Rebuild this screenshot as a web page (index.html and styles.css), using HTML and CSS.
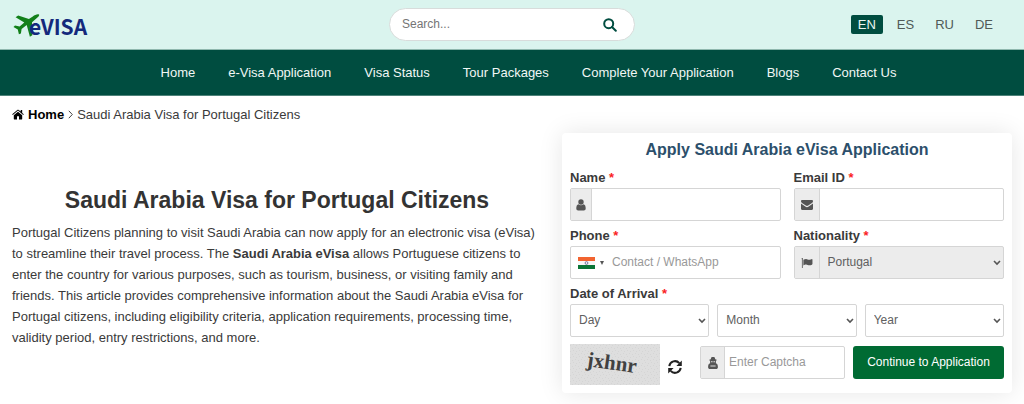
FILE: index.html
```html
<!DOCTYPE html>
<html lang="en">
<head>
<meta charset="utf-8">
<meta name="viewport" content="width=device-width, initial-scale=1">
<title>Saudi Arabia Visa for Portugal Citizens</title>
<link rel="stylesheet" href="styles.css">
</head>
<body>
<header class="topbar">
  <a class="logo" href="#" aria-label="eVISA home">
    <svg class="logo-plane" viewBox="0 0 27 24" aria-hidden="true"><path d="M26 .4c-1.500-.8-4.200.4-6.200 2L15.900 5.100 5.200 1.500 2.600 3.200l8.700 5.200-4.700 4.200L2 11.500.5 13l4.300 2.500 1.100 4.800 2-.9.700-4.500 5.100-3.900 3.200 11.800 2.400-1.500L19 8.300l4.300-3.700C25.200 3 26.700 1.500 26 .4z"/></svg>
    <span class="logo-text">eVISA</span>
  </a>
  <form class="search" role="search">
    <input class="search-input" type="search" placeholder="Search..." aria-label="Search">
    <button class="search-button" type="button" aria-label="Search">
      <svg viewBox="0 0 14 14" aria-hidden="true"><circle cx="5.700" cy="5.700" r="4.500"/><path d="M9 9l3.800 3.800"/></svg>
    </button>
  </form>
  <nav class="languages" aria-label="Language">
    <a class="language language-active" href="#">EN</a>
    <a class="language" href="#">ES</a>
    <a class="language" href="#">RU</a>
    <a class="language" href="#">DE</a>
  </nav>
</header>
<nav class="menu" aria-label="Main">
  <a href="#">Home</a>
  <a href="#">e-Visa Application</a>
  <a href="#">Visa Status</a>
  <a href="#">Tour Packages</a>
  <a href="#">Complete Your Application</a>
  <a href="#">Blogs</a>
  <a href="#">Contact Us</a>
</nav>
<main class="page">
  <nav class="breadcrumb" aria-label="Breadcrumb">
    <a href="#"><svg class="home-icon" viewBox="0 0 12 11" aria-hidden="true"><path d="M6 2.800 1.800 6.300V10c0 .3.200.5.500.5H5V7.300h2v3.200h2.700c.3 0 .5-.2.500-.5V6.300zM11.800 5.200 10.200 3.900V1H8.700v1.600L6.700.9c-.4-.3-1-.3-1.400 0L.2 5.200l.6.700L6 1.600l5.200 4.300z"/></svg>Home</a>
    <svg class="chevron" viewBox="0 0 5 9" aria-hidden="true"><path d="M.8.8 4.300 4.500.8 8.200"/></svg>
    <span>Saudi Arabia Visa for Portugal Citizens</span>
  </nav>
  <div class="columns">
    <section class="intro">
      <h1>Saudi Arabia Visa for Portugal Citizens</h1>
      <p>Portugal Citizens planning to visit Saudi Arabia can now apply for an electronic visa (eVisa) to streamline their travel process. The <strong>Saudi Arabia eVisa</strong> allows Portuguese citizens to enter the country for various purposes, such as tourism, business, or visiting family and friends. This article provides comprehensive information about the Saudi Arabia eVisa for Portugal citizens, including eligibility criteria, application requirements, processing time, validity period, entry restrictions, and more.</p>
    </section>
    <form class="card">
      <h2>Apply Saudi Arabia eVisa Application</h2>
      <div class="grid-two">
        <div class="field">
          <label for="name">Name <span class="required">*</span></label>
          <div class="control">
            <span class="addon addon-small"><svg viewBox="0 0 10 12" aria-hidden="true"><circle cx="5" cy="3" r="2.700"/><path d="M2.600 5.300C.9 5.500.3 7.200.3 9.600c0 1.300.7 2 1.900 2h5.600c1.200 0 1.900-.7 1.900-2 0-2.400-.6-4.100-2.300-4.300-.7.700-1.500 1-2.400 1s-1.700-.3-2.400-1z"/></svg></span>
            <input id="name" type="text">
          </div>
        </div>
        <div class="field">
          <label for="email">Email ID <span class="required">*</span></label>
          <div class="control">
            <span class="addon"><svg class="icon-wide" viewBox="0 0 12 10" aria-hidden="true"><path d="M0 1.300C0 .5.500 0 1.200 0h9.600c.7 0 1.200.5 1.200 1.200 0 .8-.5 1.400-1.100 1.800L7.200 5.500c-.4.300-.8.500-1.200.5s-.8-.2-1.200-.5L1 3C.5 2.600 0 1.900 0 1.300zM0 3.500c.2.200.5.400.7.600l3.600 2.500c.5.300 1 .7 1.700.7s1.200-.4 1.700-.7l3.600-2.500c.2-.2.500-.4.700-.6v5.300c0 .7-.5 1.200-1.200 1.200H1.200C.5 10 0 9.500 0 8.800z"/></svg></span>
            <input id="email" type="email">
          </div>
        </div>
        <div class="field">
          <label for="phone">Phone <span class="required">*</span></label>
          <div class="control">
            <button class="country" type="button" aria-label="Country code: India">
              <svg class="flag" viewBox="0 0 17 12" aria-hidden="true"><path fill="#f7f7f7" d="M0 0h17v12H0z"/><path fill="#f26430" d="M0 0h17v4H0z"/><path fill="#0a7536" d="M0 8h17v4H0z"/><circle cx="8.500" cy="6" r="1.400" fill="none" stroke="#7377a2"/></svg>
              <svg class="caret" viewBox="0 0 4 4" aria-hidden="true"><path d="M0 0h4L2 4z"/></svg>
            </button>
            <input id="phone" type="tel" placeholder="Contact / WhatsApp">
          </div>
        </div>
        <div class="field">
          <label for="nationality">Nationality <span class="required">*</span></label>
          <div class="control control-muted">
            <span class="addon"><svg class="icon-wide" viewBox="0 0 12 11" aria-hidden="true"><path d="M0 .8C0 .3.300 0 .8 0s.8.300.8.800c0 .3-.1.500-.3.700V11H.4V1.500C.2 1.300 0 1.100 0 .8zM2 2c1-.6 2-1 3-1 1.300 0 2 .9 3.200.9 1.300 0 2.700-.9 3.200-.9.300 0 .6.200.6.600v5.100c0 .4-.3.500-.6.600-.9.500-1.800.8-2.800.8C7.200 8.100 6.300 7.200 5 7.200c-1 0-1.800.5-3 1.100z"/></svg></span>
            <select id="nationality"><option>Portugal</option></select>
          </div>
        </div>
      </div>
      <fieldset class="field arrival">
        <legend>Date of Arrival <span class="required">*</span></legend>
        <div class="grid-three">
          <div class="control"><select aria-label="Day"><option>Day</option></select></div>
          <div class="control"><select aria-label="Month"><option>Month</option></select></div>
          <div class="control"><select aria-label="Year"><option>Year</option></select></div>
        </div>
      </fieldset>
      <div class="captcha-row">
        <svg class="captcha" viewBox="0 0 90 41" role="img" aria-label="Captcha code">
          <defs><pattern id="grain" width="6" height="6" patternUnits="userSpaceOnUse"><path fill="#d5d5d5" d="M0 1h1v1H0zM3 0h1v1H3zM2 4h1v1H2zM5 3h1v1H5z"/></pattern></defs>
          <path fill="#dedede" d="M0 0h90v41H0z"/><path fill="url(#grain)" d="M0 0h90v41H0z"/>
          <text class="captcha-text" x="16" y="22" transform="rotate(8 16 22)">jxhnr</text>
        </svg>
        <button class="refresh" type="button" aria-label="Refresh captcha">
          <svg viewBox="0 0 14 14" aria-hidden="true"><path class="arc" d="M1.300 6.100A5.700 5.700 0 0 1 11.300 3.200M12.700 7.900a5.700 5.700 0 0 1-10 2.900"/><path d="M13.800.5v5.400H8.400zM.2 13.500V8.100h5.400z"/></svg>
        </button>
        <div class="control captcha-control">
          <span class="addon addon-small"><svg viewBox="0 0 10 12" aria-hidden="true"><path d="M2.800 2.200C3 .6 3.500 0 4.300 0h1.400c.8 0 1.300.6 1.500 2.200 1 .2 1.500.5 1.500.9 0 .3-.3.600-.8.700v2.400c1.500.5 2 1.900 2 3.700 0 1.300-.7 2.100-1.900 2.100H2c-1.200 0-1.900-.8-1.900-2.100 0-1.800.5-3.200 2-3.700V3.800c-.5-.1-.8-.4-.8-.7 0-.4.500-.7 1.500-.9z"/><path class="spy-detail" d="M3 4.300h1.600v1H3zM5.400 4.300H7v1H5.400zM2.400 8.600h5.200v1H2.400z"/></svg></span>
          <input class="captcha-input" type="text" placeholder="Enter Captcha" aria-label="Enter Captcha">
        </div>
        <button class="submit" type="button">Continue to Application</button>
      </div>
    </form>
  </div>
</main>
</body>
</html>
```
FILE: styles.css
```css
* { box-sizing: border-box; }
body {
  margin: 0;
  background: #fff;
  color: #3a3a3a;
  font: 13px/21px "Liberation Sans", Arial, sans-serif;
}
a { color: inherit; text-decoration: none; }
button, input, select { font: inherit; color: inherit; margin: 0; }
button { border: 0; padding: 0; background: none; cursor: pointer; }
svg { display: block; flex: none; }

.topbar {
  display: grid;
  grid-template-columns: 1fr 246px 1fr;
  align-items: center;
  height: 50px;
  padding: 0 13px;
  background: #daf4ee;
  border-bottom: 1px solid #8fb8ae;
}
.logo { display: flex; align-items: center; padding-top: 3px; }
.logo-plane { width: 27px; height: 24px; fill: #128019; }
.logo-text {
  margin-left: -11px;
  color: #14297c;
  font: bold 21px/24px "Noto Sans CJK JP", "Liberation Sans", sans-serif;
}
.search {
  display: flex;
  align-items: center;
  height: 33px;
  padding: 0 17px 0 12px;
  background: #fff;
  border: 1px solid #d8dcdb;
  border-radius: 17px;
}
.search-input {
  flex: 1;
  min-width: 0;
  padding: 0;
  border: 0;
  outline: 0;
  background: none;
  font-size: 12px;
}
.search-input::placeholder { color: #757575; }
.search-button svg { width: 14px; height: 14px; fill: none; stroke: #004d40; stroke-width: 2; stroke-linecap: round; }
.languages { display: flex; justify-content: flex-end; gap: 7px; padding-right: 11px; }
.language { padding: 0 7px; line-height: 19px; border-radius: 2px; color: #505a57; }
.language-active { background: #004d40; color: #e8f5f1; }

.menu {
  display: flex;
  flex-wrap: wrap;
  justify-content: center;
  gap: 0 33px;
  padding: 12px 0;
  padding-left: 33px;
  background: #004d40;
  border-bottom: 1px solid #4d8279;
  color: #f1f7f5;
}

.page { padding: 8px 12px 11px; }
.breadcrumb { display: flex; align-items: center; gap: 4px; }
.breadcrumb a { display: flex; align-items: center; gap: 4px; color: #000; font-weight: bold; }
.home-icon { width: 12px; height: 11px; }
.chevron { width: 5px; height: 9px; fill: none; stroke: #444; }
.columns { display: grid; grid-template-columns: 530fr 450fr; gap: 20px; padding-top: 8px; }
.intro { padding-top: 52px; }
h1, h2, p { margin: 0; }
h1 { margin-bottom: 7px; text-align: center; color: #333; font-size: 23px; line-height: 30px; }

.card {
  display: flex;
  flex-direction: column;
  padding: 6px 8px 8px;
  border-radius: 4px;
  background: #fff;
  box-shadow: 0 0 24px rgba(0, 0, 0, .1);
}
h2 { text-align: center; color: #2c4f6b; font-size: 16px; line-height: 22px; }
.grid-two { display: grid; grid-template-columns: 1fr 1fr; gap: 4px 13px; margin-top: 6px; }
.field label, .field legend { display: block; font-weight: bold; line-height: 21px; padding: 0; }
.required { color: #fa1e1e; }
.control {
  display: flex;
  min-width: 0;
  height: 33px;
  background: #fff;
  border: 1px solid #d5d5d5;
  border-radius: 2px;
}
.control input, .control select {
  flex: 1;
  min-width: 0;
  width: 100%;
  padding: 0 8px;
  border: 0;
  outline: 0;
  background: none;
  font-size: 12px;
}
.control input::placeholder { color: #999; }
.control select {
  appearance: none;
  color: #606060;
  background: url("data:image/svg+xml,%3Csvg xmlns='http://www.w3.org/2000/svg' viewBox='0 0 8 6'%3E%3Cpath d='M1 1l3 3 3-3' fill='none' stroke='%23555' stroke-width='1.6'/%3E%3C/svg%3E") no-repeat right 2px center / 8px 6px;
}
.control-muted { background: #ececec; }
.addon {
  display: flex;
  align-items: center;
  justify-content: center;
  width: 25px;
  background: #ececec;
  border-right: 1px solid #d5d5d5;
}
.addon-small { width: 21px; }
.addon svg { width: 10px; height: 12px; fill: #555; }
.addon .icon-wide { width: 12px; height: 10px; }
.addon .spy-detail { fill: #e0e0e0; }
.country { display: flex; align-items: center; gap: 5px; padding-left: 7px; }
.flag { width: 17px; height: 12px; }
.caret { width: 4px; height: 4px; fill: #555; }
.arrival { margin: 4px 0 0; padding: 0; border: 0; min-width: 0; }
.grid-three { display: grid; grid-template-columns: 1fr 1fr 1fr; gap: 8px; }

.captcha-row { display: flex; align-items: center; margin-top: 7px; gap: 8px; }
.captcha { width: 90px; height: 41px; }
.captcha-text { font: bold 21px "Liberation Serif", serif; fill: #414141; }
.refresh { margin-top: 4px; }
.refresh svg { width: 14px; height: 14px; fill: #222; }
.refresh .arc { fill: none; stroke: #222; stroke-width: 2; }
.captcha-control { flex: 144; margin: 0 0 4px 10px; }
.captcha-control .addon { width: 24px; }
.control .captcha-input { padding: 0 4px; }
.submit {
  flex: 152;
  height: 33px;
  margin-bottom: 4px;
  border-radius: 3px;
  background: #006b33;
  color: #fff;
  font-size: 12px;
  white-space: nowrap;
}
```
